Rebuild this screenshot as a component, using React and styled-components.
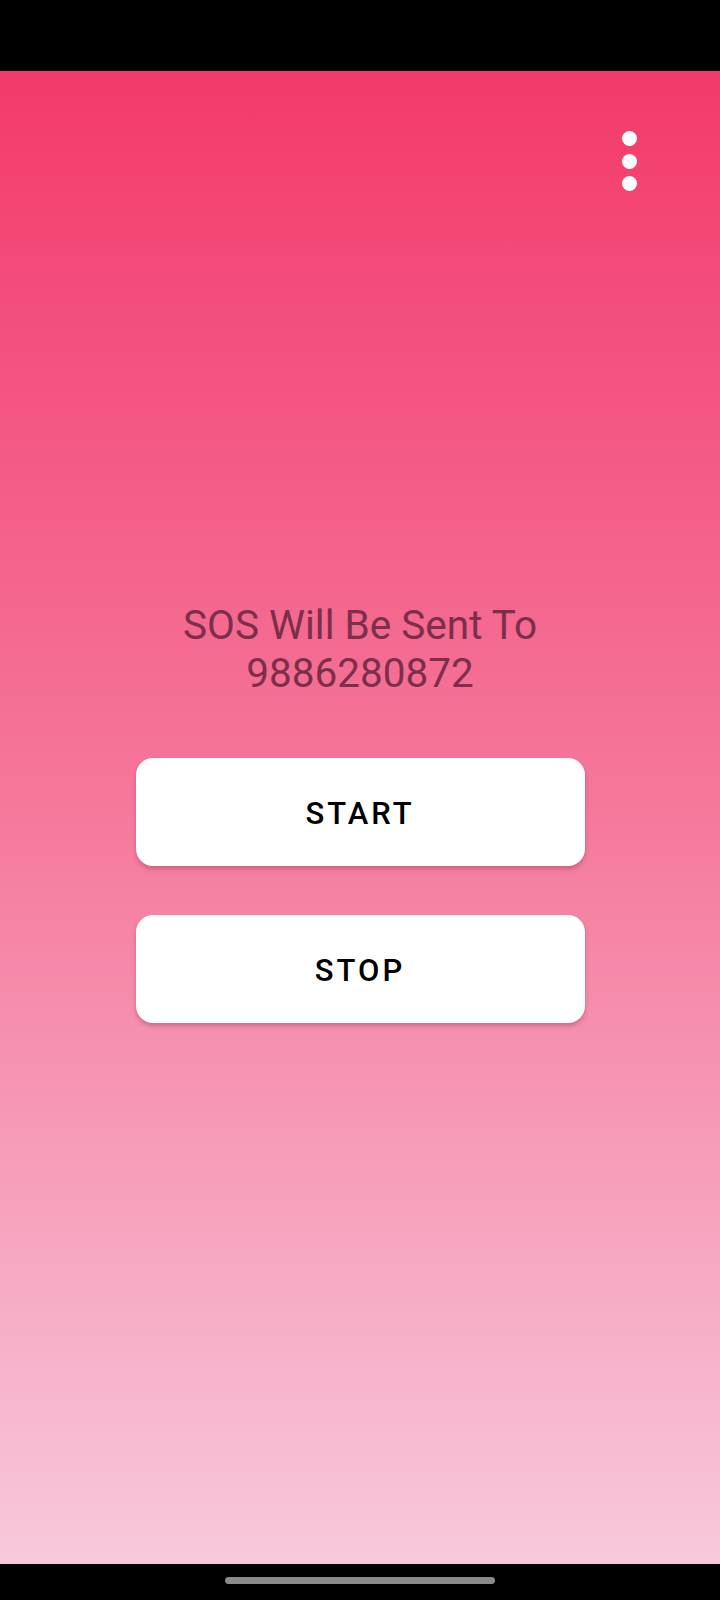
import styled, { createGlobalStyle } from "styled-components";

const GlobalStyle = createGlobalStyle`
  html, body {
    margin: 0;
    padding: 0;
    background: #000;
  }
  body {
    font-family: Roboto, "Noto Sans", "Liberation Sans", sans-serif;
  }
`;

const Phone = styled.div`
  width: 720px;
  height: 1600px;
  display: flex;
  flex-direction: column;
  background: #000;
`;

const StatusBar = styled.div`
  height: 71px;
  flex-shrink: 0;
  background: #000;
`;

const Screen = styled.main`
  flex: 1;
  display: flex;
  flex-direction: column;
  align-items: center;
  background: linear-gradient(180deg, #f33a6a 0%, #f5799c 50%, #f8c8dc 100%);
`;

const MenuRow = styled.div`
  align-self: stretch;
  display: flex;
  justify-content: flex-end;
  padding: 60px 83px 0 0;
`;

const MenuButton = styled.button`
  display: flex;
  flex-direction: column;
  gap: 7.5px;
  padding: 0;
  border: 0;
  background: none;
  cursor: pointer;
`;

const Dot = styled.span`
  width: 15px;
  height: 15px;
  border-radius: 50%;
  background: #fff;
`;

const Message = styled.p`
  margin: 410px 0 0;
  font-size: 40.5px;
  line-height: 48px;
  font-weight: 400;
  color: #7c2f4b;
  text-align: center;
`;

const Actions = styled.div`
  display: flex;
  flex-direction: column;
  gap: 49px;
  margin-top: 60.5px;
`;

const ActionButton = styled.button`
  width: 449px;
  height: 108px;
  padding: 4px 0 0;
  border: 0;
  border-radius: 17px;
  background: #fff;
  box-shadow: 0 3px 4px rgba(120, 30, 60, 0.3);
  font-family: Roboto, "Noto Sans", sans-serif;
  font-size: 31px;
  font-weight: 500;
  letter-spacing: 3px;
  color: #000;
  cursor: pointer;
`;

const NavBar = styled.div`
  height: 36px;
  flex-shrink: 0;
  display: flex;
  justify-content: center;
  padding-top: 13px;
  box-sizing: border-box;
  background: #000;
`;

const HomeIndicator = styled.div`
  width: 270px;
  height: 7px;
  border-radius: 4px;
  background: #8a8a8a;
`;

const phone = "9886280872";

export default function App() {
  return (
    <>
      <GlobalStyle />
      <Phone>
        <StatusBar />
        <Screen>
          <MenuRow>
            <MenuButton aria-label="More options">
              <Dot />
              <Dot />
              <Dot />
            </MenuButton>
          </MenuRow>
          <Message>
            SOS Will Be Sent To
            <br />
            {phone}
          </Message>
          <Actions>
            <ActionButton>START</ActionButton>
            <ActionButton>STOP</ActionButton>
          </Actions>
        </Screen>
        <NavBar>
          <HomeIndicator />
        </NavBar>
      </Phone>
    </>
  );
}
